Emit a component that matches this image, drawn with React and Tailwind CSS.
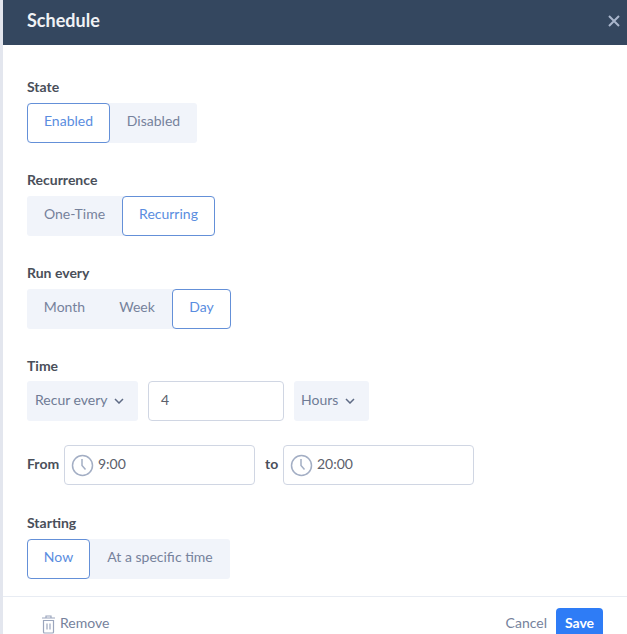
import React from "react";

function Seg({ items, active }) {
  return (
    <div className="flex h-10 w-fit rounded-[3px] bg-[#f1f4fa]">
      {items.map(([label, w]) => (
        <div
          key={label}
          style={{ width: w }}
          className={
            label === active
              ? "flex items-center justify-center rounded-[4px] border-[1.5px] border-[#6490d8] bg-white pb-[5px] text-[#5a8de0]"
              : "flex items-center justify-center pb-[5px] text-[#76829c]"
          }
        >
          {label}
        </div>
      ))}
    </div>
  );
}

function Label({ children, className = "" }) {
  return (
    <div className={"flex h-5 items-center pb-[2px] font-bold text-[#4a4f5a] " + className}>{children}</div>
  );
}

function Chevron() {
  return (
    <svg width="10" height="6" viewBox="0 0 10 6" fill="none" stroke="#5f6b85" strokeWidth="1.5">
      <path d="M1 1l4 4 4-4" />
    </svg>
  );
}

function Clock() {
  return (
    <svg width="23" height="23" viewBox="0 0 23 23" fill="none" stroke="#a3aec4" strokeWidth="1.5">
      <circle cx="11.5" cy="11.5" r="10" />
      <path d="M11 5v6.5l3.5 4" />
    </svg>
  );
}

function TimeInput({ value, className }) {
  return (
    <div className={"flex h-10 items-center gap-[4px] rounded-[4px] border-[1.5px] border-[#d0d6e3] bg-white pl-[6px] text-[#5b606b] " + className}>
      <Clock />
      <span className="pb-[3px]">{value}</span>
    </div>
  );
}

export default function App() {
  return (
    <div className="h-[634px] w-[627px] overflow-hidden bg-white text-[14px] [font-family:Lato,sans-serif]">
      <div className="flex h-[634px] flex-col border-l-[3px] border-[#e3e6ee]">
        <header className="flex h-[45px] shrink-0 items-center justify-between bg-[#34475f] pb-[4px] pl-6 pr-[7px] text-white">
          <span className="text-[18px] font-bold text-[#f0f2f5]">Schedule</span>
          <svg className="mt-[1px]" width="12" height="12" viewBox="0 0 12 12" stroke="#a9b6cc" strokeWidth="2">
            <path d="M1 1l10 10M11 1L1 11" />
          </svg>
        </header>

        <main className="flex flex-1 flex-col px-6 pt-8">
          <Label className="mb-[6px]">State</Label>
          <Seg items={[["Enabled", 83], ["Disabled", 87]]} active="Enabled" />

          <Label className="mb-[6px] mt-[27px]">Recurrence</Label>
          <Seg items={[["One-Time", 95], ["Recurring", 93]]} active="Recurring" />

          <Label className="mb-[6px] mt-[27px]">Run every</Label>
          <Seg items={[["Month", 75], ["Week", 70], ["Day", 59]]} active="Day" />

          <Label className="mb-[5px] mt-[27px]">Time</Label>
          <div className="flex h-10 gap-[10px]">
            <div className="flex w-[111px] items-center gap-[6px] rounded-[3px] bg-[#f1f4fa] pl-2 text-[#6f7b95]">
              <span className="pb-[3px]">Recur every</span> <Chevron />
            </div>
            <div className="flex w-[136px] items-center rounded-[4px] border-[1.5px] border-[#d0d6e3] bg-white pb-[3px] pl-[12px] text-[#5b606b]">4</div>
            <div className="flex w-[75px] items-center gap-[7px] rounded-[3px] bg-[#f1f4fa] pl-[7px] text-[#6f7b95]">
              <span className="pb-[3px]">Hours</span> <Chevron />
            </div>
          </div>

          <div className="mt-6 flex h-10 items-center">
            <span className="w-[37px] pb-[3px] font-bold text-[#4a4f5a]">From</span>
            <TimeInput value="9:00" className="w-[191px]" />
            <span className="w-[28px] pb-[3px] pl-[10px] font-bold text-[#4a4f5a]">to</span>
            <TimeInput value="20:00" className="w-[191px]" />
          </div>

          <Label className="mb-[6px] mt-7">Starting</Label>
          <Seg items={[["Now", 63], ["At a specific time", 140]]} active="Now" />
        </main>

        <footer className="flex h-[38px] shrink-0 items-start justify-between border-t border-[#e8ecf3] pl-[38px] pr-6">
          <div className="mt-[15px] flex items-center gap-[4px] text-[#76829c]">
            <svg width="15" height="20" viewBox="0 0 15 20" fill="none" stroke="#9ba6bd" strokeWidth="1.2">
              <path d="M1 4h13M5 4V2h5v2M2.5 6.5h10V18a1 1 0 0 1-1 1h-8a1 1 0 0 1-1-1zM6 9.5v6M9 9.5v6" />
            </svg>
            <span className="pb-[2px]">Remove</span>
          </div>
          <div className="mt-[11px] flex items-start gap-[9px]">
            <span className="mt-[4px] text-[#76829c]">Cancel</span>
            <div className="flex h-[26px] w-[47px] items-center justify-center rounded-t-[4px] bg-[#2e7cf6] pt-[2px] font-bold text-white">Save</div>
          </div>
        </footer>
      </div>
    </div>
  );
}
